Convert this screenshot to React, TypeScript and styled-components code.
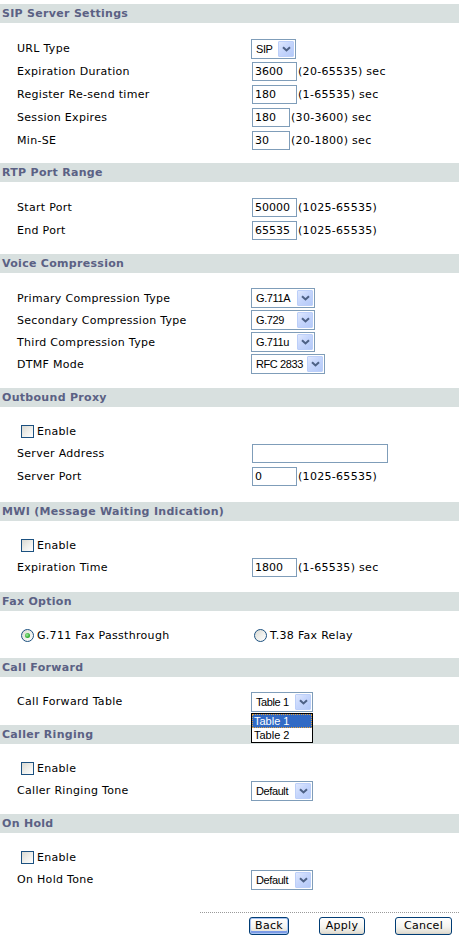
import React from "react";
import styled, { createGlobalStyle } from "styled-components";

const GlobalStyle = createGlobalStyle`
  html, body {
    margin: 0;
    padding: 0;
    background: #ffffff;
  }
  body {
    font-family: "DejaVu Sans", Verdana, sans-serif;
    font-size: 11px;
    letter-spacing: 0.3px;
    color: #000000;
  }
`;

const Page = styled.div`
  width: 459px;
  padding-top: 4px;
`;

const SectionHeader = styled.div`
  height: 19px;
  line-height: 19px;
  padding-left: 2px;
  background: #d8e0df;
  color: #5b6184;
  font-weight: bold;
  font-size: 11px;
  white-space: nowrap;
`;

const SectionBody = styled.div<{ $bottom?: number }>`
  padding: 14px 0 ${(p) => p.$bottom ?? 11}px;
`;

const Row = styled.div<{ $h?: number }>`
  display: grid;
  grid-template-columns: 251px 1fr;
  align-items: center;
  height: ${(p) => p.$h ?? 23}px;
`;

const Label = styled.div`
  padding-left: 17px;
  white-space: nowrap;
`;

const Field = styled.div`
  display: flex;
  align-items: center;
  white-space: nowrap;
`;

const TextInput = styled.input<{ $w: number }>`
  box-sizing: border-box;
  width: ${(p) => p.$w}px;
  height: 19px;
  margin: 0 1px 0 1px;
  padding: 0 2px;
  border: 1px solid #7f9db9;
  background: #ffffff;
  font-family: "DejaVu Sans", Verdana, sans-serif;
  font-size: 11px;
  letter-spacing: 0;
  color: #000000;
  outline: none;
`;

const Hint = styled.span`
  padding-left: 0;
`;

/* Windows XP style combo box */
const SelectBox = styled.div<{ $w: number }>`
  position: relative;
  box-sizing: border-box;
  display: flex;
  align-items: center;
  width: ${(p) => p.$w}px;
  height: 20px;
  padding: 1px;
  border: 1px solid #7f9db9;
  background: #ffffff;
  font-family: "Liberation Sans", Arial, sans-serif;
  font-size: 11px;
  letter-spacing: -0.4px;
`;

const SelectText = styled.span`
  flex: 1;
  padding-left: 3px;
  white-space: nowrap;
  overflow: hidden;
`;

const ArrowButton = styled.span`
  box-sizing: border-box;
  flex: none;
  width: 16px;
  height: 16px;
  display: flex;
  align-items: center;
  justify-content: center;
  border: 1px solid #bccff9;
  border-radius: 1px;
  background: linear-gradient(135deg, #dfe8fd 0%, #c6d6fc 45%, #b4c9f8 100%);
`;

const OptionList = styled.div<{ $w: number }>`
  position: absolute;
  top: calc(100% + 2px);
  left: -1px;
  box-sizing: border-box;
  width: ${(p) => p.$w}px;
  border: 1px solid #000000;
  background: #ffffff;
  z-index: 5;
`;

const OptionItem = styled.div<{ $active?: boolean }>`
  height: 14px;
  line-height: 14px;
  padding-left: 2px;
  font-family: "Liberation Sans", Arial, sans-serif;
  font-size: 11px;
  letter-spacing: 0;
  color: ${(p) => (p.$active ? "#ffffff" : "#000000")};
  background: ${(p) => (p.$active ? "#316ac5" : "transparent")};
  outline: ${(p) => (p.$active ? "1px dotted #e0a040" : "none")};
  outline-offset: -1px;
`;

const CheckRow = styled.label`
  display: flex;
  align-items: center;
  gap: 3px;
  padding-left: 21px;
  white-space: nowrap;
`;

const CheckBox = styled.span`
  box-sizing: border-box;
  flex: none;
  width: 13px;
  height: 13px;
  border: 1px solid #1c5180;
  background: linear-gradient(135deg, #d9d9d2 0%, #eeeeea 50%, #ffffff 100%);
`;

const RadioRow = styled.label<{ $pad: number }>`
  display: flex;
  align-items: center;
  gap: 3px;
  padding-left: ${(p) => p.$pad}px;
  white-space: nowrap;
`;

const RadioDot = styled.span<{ $on?: boolean }>`
  box-sizing: border-box;
  flex: none;
  width: 13px;
  height: 13px;
  border-radius: 50%;
  border: 1px solid #1c5180;
  background: linear-gradient(135deg, #d9d9d2 0%, #eeeeea 50%, #ffffff 100%);
  display: flex;
  align-items: center;
  justify-content: center;
  &::after {
    content: "";
    display: ${(p) => (p.$on ? "block" : "none")};
    width: 5px;
    height: 5px;
    border-radius: 50%;
    background: radial-gradient(circle at 40% 40%, #a4eaa4 0%, #39b339 55%, #1d8f1d 100%);
  }
`;

const Footer = styled.div`
  margin-left: 200px;
  border-top: 1px dotted #9a9a9a;
  padding: 4px 7px 0 0;
  display: flex;
  justify-content: flex-end;
  gap: 30px;
`;

const XpButton = styled.button<{ $w: number; $default?: boolean }>`
  box-sizing: border-box;
  width: ${(p) => p.$w}px;
  height: 18px;
  padding: 0;
  border: 1px solid #003c74;
  border-radius: 3px;
  background: linear-gradient(180deg, #ffffff 0%, #f5f4ef 55%, #e3e0d6 90%, #d6d0c5 100%);
  font-family: "DejaVu Sans", Verdana, sans-serif;
  font-size: 11px;
  letter-spacing: 0.3px;
  color: #000000;
  line-height: 14px;
  box-shadow: ${(p) =>
    p.$default
      ? "inset 0 0 0 1px #a9c4f2, inset 0 -2px 0 1px #7b9be6"
      : "none"};
`;

const Chevron = () => (
  <svg width="9" height="6" viewBox="0 0 9 6">
    <path d="M1 1.2 L4.5 4.5 L8 1.2" fill="none" stroke="#4d6185" strokeWidth="2" />
  </svg>
);

type SelectProps = { value: string; w: number; options?: string[] };

const Select = ({ value, w, options }: SelectProps) => (
  <SelectBox $w={w}>
    <SelectText>{value}</SelectText>
    <ArrowButton>
      <Chevron />
    </ArrowButton>
    {options && (
      <OptionList $w={w}>
        {options.map((o) => (
          <OptionItem key={o} $active={o === value}>
            {o}
          </OptionItem>
        ))}
      </OptionList>
    )}
  </SelectBox>
);

type InputRowProps = { label: string; value: string; w: number; hint?: string; h?: number };

const InputRow = ({ label, value, w, hint, h }: InputRowProps) => (
  <Row $h={h}>
    <Label>{label}</Label>
    <Field>
      <TextInput $w={w} defaultValue={value} readOnly />
      {hint && <Hint>{hint}</Hint>}
    </Field>
  </Row>
);

type SelectRowProps = { label: string; value: string; w: number; h?: number; options?: string[] };

const SelectRow = ({ label, value, w, h, options }: SelectRowProps) => (
  <Row $h={h}>
    <Label>{label}</Label>
    <Field>
      <Select value={value} w={w} options={options} />
    </Field>
  </Row>
);

const EnableRow = () => (
  <Row $h={21}>
    <CheckRow>
      <CheckBox />
      Enable
    </CheckRow>
  </Row>
);

export default function App() {
  return (
    <>
      <GlobalStyle />
      <Page>
        <SectionHeader>SIP Server Settings</SectionHeader>
        <SectionBody>
          <SelectRow label="URL Type" value="SIP" w={45} />
          <InputRow label="Expiration Duration" value="3600" w={45} hint="(20-65535) sec" />
          <InputRow label="Register Re-send timer" value="180" w={45} hint="(1-65535) sec" />
          <InputRow label="Session Expires" value="180" w={38} hint="(30-3600) sec" />
          <InputRow label="Min-SE" value="30" w={38} hint="(20-1800) sec" />
        </SectionBody>

        <SectionHeader>RTP Port Range</SectionHeader>
        <SectionBody $bottom={12}>
          <InputRow label="Start Port" value="50000" w={45} hint="(1025-65535)" />
          <InputRow label="End Port" value="65535" w={45} hint="(1025-65535)" />
        </SectionBody>

        <SectionHeader>Voice Compression</SectionHeader>
        <SectionBody $bottom={13}>
          <SelectRow label="Primary Compression Type" value="G.711A" w={64} h={22} />
          <SelectRow label="Secondary Compression Type" value="G.729" w={64} h={22} />
          <SelectRow label="Third Compression Type" value="G.711u" w={64} h={22} />
          <SelectRow label="DTMF Mode" value="RFC 2833" w={74} h={22} />
        </SectionBody>

        <SectionHeader>Outbound Proxy</SectionHeader>
        <SectionBody $bottom={14}>
          <EnableRow />
          <InputRow label="Server Address" value="" w={136} />
          <InputRow label="Server Port" value="0" w={45} hint="(1025-65535)" />
        </SectionBody>

        <SectionHeader>MWI (Message Waiting Indication)</SectionHeader>
        <SectionBody $bottom={13}>
          <EnableRow />
          <InputRow label="Expiration Time" value="1800" w={45} hint="(1-65535) sec" />
        </SectionBody>

        <SectionHeader>Fax Option</SectionHeader>
        <SectionBody $bottom={12}>
          <Row $h={21}>
            <RadioRow $pad={21}>
              <RadioDot $on />
              G.711 Fax Passthrough
            </RadioRow>
            <RadioRow $pad={3}>
              <RadioDot />
              T.38 Fax Relay
            </RadioRow>
          </Row>
        </SectionBody>

        <SectionHeader>Call Forward</SectionHeader>
        <SectionBody $bottom={13}>
          <SelectRow
            label="Call Forward Table"
            value="Table 1"
            w={62}
            h={21}
            options={["Table 1", "Table 2"]}
          />
        </SectionBody>

        <SectionHeader>Caller Ringing</SectionHeader>
        <SectionBody $bottom={12}>
          <EnableRow />
          <SelectRow label="Caller Ringing Tone" value="Default" w={62} />
        </SectionBody>

        <SectionHeader>On Hold</SectionHeader>
        <SectionBody $bottom={21}>
          <EnableRow />
          <SelectRow label="On Hold Tone" value="Default" w={62} />
        </SectionBody>

        <Footer>
          <XpButton $w={40} $default>
            Back
          </XpButton>
          <XpButton $w={46}>Apply</XpButton>
          <XpButton $w={57}>Cancel</XpButton>
        </Footer>
      </Page>
    </>
  );
}
